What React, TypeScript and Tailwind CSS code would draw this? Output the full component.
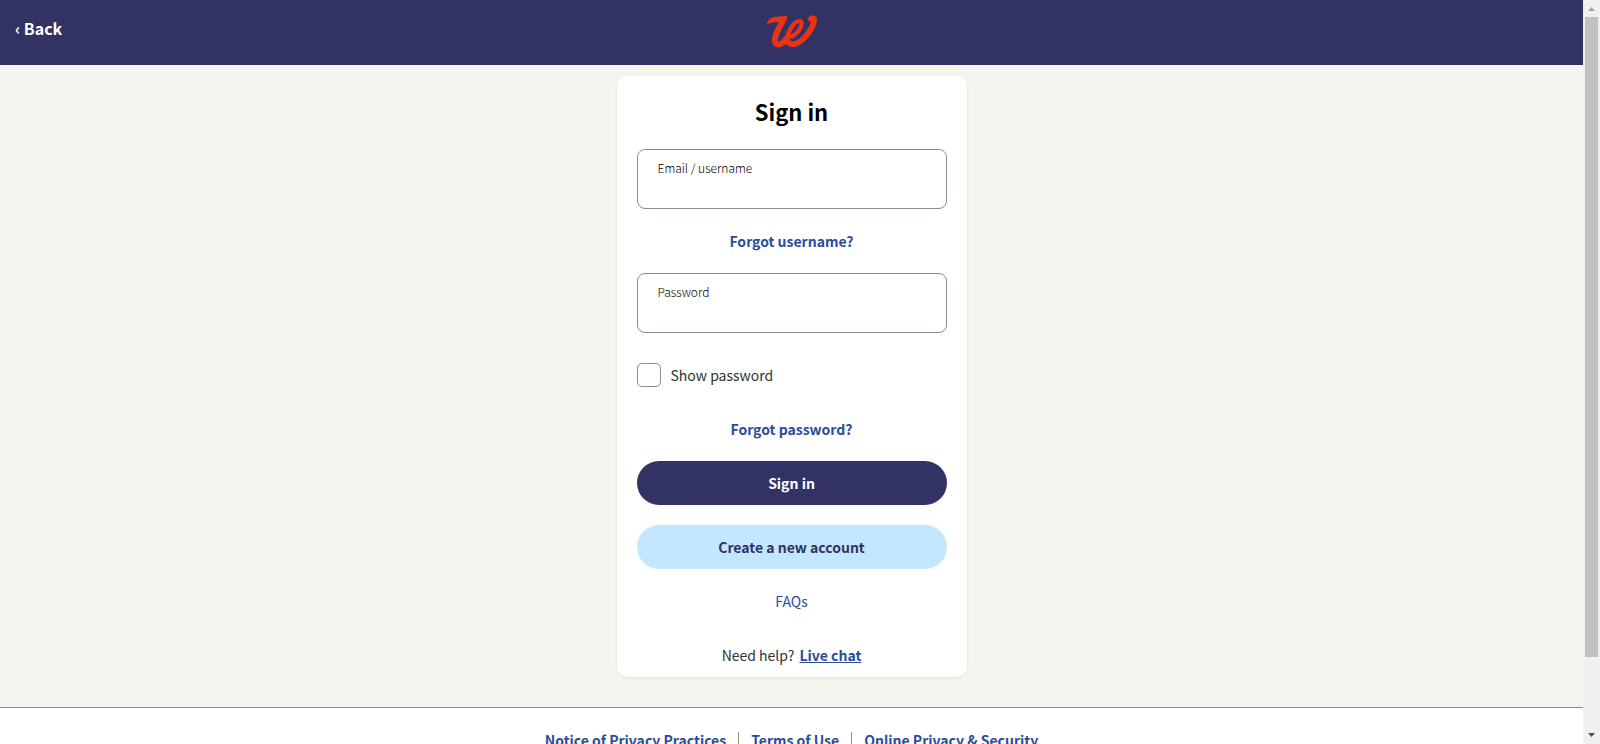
import React from "react";

const linkBold = "font-bold text-[#2a4c9d] hover:underline";

function Logo() {
  return (
    <svg viewBox="0 0 51 33" className="h-[33px] w-[51px]" role="img" aria-label="Home" fill="none" stroke="#e93414" strokeLinecap="round" strokeLinejoin="round">
      <path d="M1.500 8.500C3 4 6 2.300 10 2.200L21 1.400L19 6.500C14 6.800 12 6.600 8.500 6.800C6 7 3.500 8 1.500 8.500Z" strokeWidth="1" fill="#e93414" />
      <path d="M17.500 4.500C15 10 9.500 18 9 24C8.500 30.500 13.500 30.500 17 27.500C19.500 25 21 23 22.500 21" strokeWidth="6" />
      <path d="M26 21.500C31 19 36 12.500 35.600 8C35 4 29.500 6 26 11.500C22 17.500 20.500 24 22.500 27.500C25 31.500 32 29.500 37 25C44 18.500 48.900 9.500 48.700 4.500C48.500 1.800 45.500 1.800 44 4.200" strokeWidth="4.300" />
      <path d="M23 28C27 31 34 27.500 38 23C44 16.500 48.300 9 48 4" strokeWidth="5.600" />
    </svg>
  );
}

function Field({ id, label, type, autoComplete }: { id: string; label: string; type: string; autoComplete: string }) {
  return (
    <div className="grid h-[60px] w-full">
      <label htmlFor={id} className="z-10 col-start-1 row-start-1 self-start px-[21px] pt-[11px] text-xs leading-4 font-light text-black">
        {label}
      </label>
      <input
        id={id}
        type={type}
        autoComplete={autoComplete}
        className="col-start-1 row-start-1 w-full min-w-0 rounded-lg border border-[#938a8a] bg-white px-5 pt-6 text-sm outline-none focus:border-[#2a4c9d]"
      />
    </div>
  );
}

export default function App() {
  const [show, setShow] = React.useState(false);
  return (
    <div className="flex h-screen overflow-hidden bg-[#f4f5ef] font-['Noto_Sans_CJK_SC',sans-serif] text-sm leading-5 text-[#2c3434]">
      <div className="flex min-w-0 flex-1 flex-col">
        <header className="grid h-[65px] shrink-0 grid-cols-3 bg-[#333264] px-[15px]">
          <a href="#back" className="justify-self-start pt-4 text-base leading-6 font-bold text-white">‹ Back</a>
          <a href="#home" className="justify-self-center pt-[15px]">
            <Logo />
          </a>
        </header>

        <main className="flex shrink-0 justify-center pt-[11px] pb-[30px]">
          <form onSubmit={(e) => e.preventDefault()} className="flex w-[350px] flex-col items-center rounded-[10px] bg-white px-5 pt-5 pb-3 shadow-[0_1px_3px_rgba(0,0,0,0.08)]">
            <h1 className="text-[22px] leading-[30px] font-bold text-black">Sign in</h1>
            <div className="mt-[23px] w-full">
              <Field id="username" label="Email / username" type="text" autoComplete="username" />
            </div>
            <a href="#forgot-username" className={`mt-[22px] ${linkBold}`}>Forgot username?</a>
            <div className="mt-[22px] w-full">
              <Field id="password" label="Password" type={show ? "text" : "password"} autoComplete="current-password" />
            </div>
            <label className="mt-[30px] flex h-6 items-center gap-2.5 self-start">
              <input
                type="checkbox"
                checked={show}
                onChange={(e) => setShow(e.target.checked)}
                className="size-6 appearance-none rounded-[5px] border border-[#938a8a] bg-white checked:bg-[#333264]"
              />
              Show password
            </label>
            <a href="#forgot-password" className={`mt-8 ${linkBold}`}>Forgot password?</a>
            <button type="submit" className="mt-[22px] h-11 w-full rounded-full bg-[#333264] font-bold text-white">Sign in</button>
            <button type="button" className="mt-5 h-11 w-full rounded-full bg-[#c2e7ff] font-bold text-[#333264]">Create a new account</button>
            <a href="#faqs" className="mt-[22px] text-[#2a4c9d]">FAQs</a>
            <p className="mt-[34px] flex gap-[5px]">
              Need help? <a href="#chat" className="font-bold text-[#2a4c9d] underline">Live chat</a>
            </p>
          </form>
        </main>

        <footer className="flex-1 border-t border-[#8c8c88] bg-white pt-[22px]">
          <nav className="flex items-center justify-center">
            <a href="#notice" className={linkBold}>Notice of Privacy Practices</a>
            <span className="mx-3 h-4 w-px bg-[#9a9468]" />
            <a href="#terms" className={linkBold}>Terms of Use</a>
            <span className="mx-3 h-4 w-px bg-[#9a9468]" />
            <a href="#privacy" className={linkBold}>Online Privacy &amp; Security</a>
          </nav>
        </footer>
      </div>

      <div aria-hidden="true" className="flex w-[17px] flex-col items-center bg-[#f0f0f0]">
        <svg viewBox="0 0 17 17" className="size-[17px]"><path d="M5 11h7L8.500 7z" fill="#a3a3a3" /></svg>
        <div className="w-[13px] flex-[640] bg-[#c1c1c1]" />
        <div className="flex-[70]" />
        <svg viewBox="0 0 17 17" className="size-[17px]"><path d="M5 6h7L8.500 10z" fill="#505050" /></svg>
      </div>
    </div>
  );
}
